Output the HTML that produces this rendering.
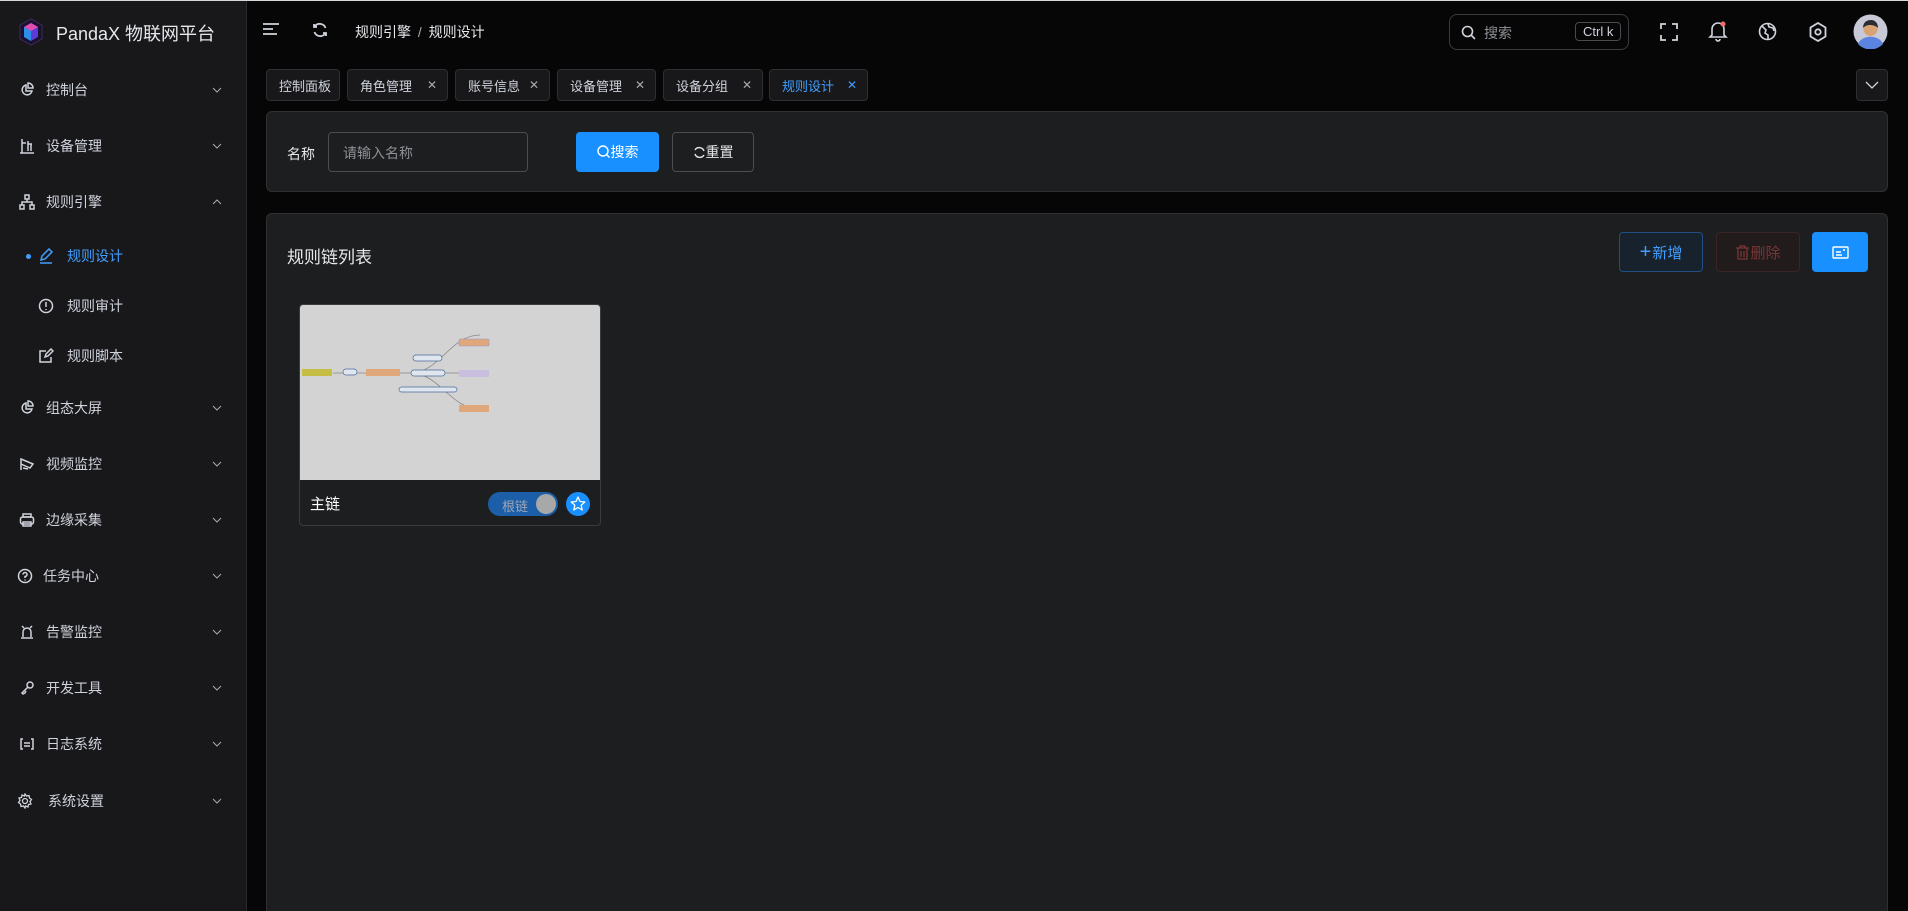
<!DOCTYPE html>
<html><head><meta charset="utf-8"><style>
*{box-sizing:border-box;margin:0;padding:0}
html{width:1908px;height:911px;overflow:hidden}
body{width:1908px;height:911px;overflow:hidden;background:#060606;font-family:"Liberation Sans","Noto Sans CJK SC",sans-serif;color:#cfd3dc;position:relative;font-size:14px}
.topline{position:absolute;left:0;top:0;width:1908px;height:1px;background:#d8d8d8}
.side{position:absolute;left:0;top:1px;width:247px;bottom:0;background:#18181b;border-right:1px solid #2a2a2e}
.logo{position:absolute;left:18px;top:17px}
.brand{position:absolute;left:56px;top:19px;font-size:18px;color:#e5e7eb}
.mi{position:absolute;left:0;width:247px;height:40px;display:flex;align-items:center;color:#cfd3dc;font-size:14px}
.mi .ic{position:absolute;left:19px;width:16px;height:16px}
.mi .tx{position:absolute;left:46px}
.mi .ch{position:absolute;left:212px;width:10px;height:10px}
.sub .tx{left:67px}
.sub .ic{left:38px}
.hdr{position:absolute;left:248px;top:1px;right:0;height:60px;background:#060606}
.tab{position:absolute;top:69px;height:32px;border:1px solid #2e2f33;border-radius:4px;background:#18181b;font-size:13px;color:#cfd3dc;display:flex;align-items:center;padding-left:12px}
.tab .x{position:absolute;right:10px;font-size:12px;color:#aaa}
.panel{position:absolute;left:266px;width:1622px;background:#1d1e1f;border:1px solid #303034;border-radius:6px}
.btn{position:absolute;height:40px;border-radius:4px;display:flex;align-items:center;justify-content:center;font-size:14px}
</style></head><body>
<div class="topline"></div>
<div class="side">
 <svg class="logo" width="26" height="28" viewBox="0 0 26 28"><polygon points="13,1 24,7 24,21 13,27 2,21 2,7" fill="#1a1030" stroke="#3b2a5a"/><polygon points="13,5 20,9 20,19 13,23 6,19 6,9" fill="#5b3bd6"/><polygon points="13,5 20,9 13,13 6,9" fill="#e04cb0"/><polygon points="6,9 13,13 13,23 6,19" fill="#2c8ee8"/></svg>
 <div class="brand">PandaX 物联网平台</div>

 <div class="mi" style="top:69px"><svg class="ic" viewBox="0 0 16 16" fill="none" stroke="#cfd3dc" stroke-width="1.5"><path d="M7 3a5 5 0 1 0 6 6H7z"/><path d="M9 1v5h5a5 5 0 0 0-5-5z"/></svg><span class="tx">控制台</span><svg class="ch" viewBox="0 0 10 10"><path d="M1 3l4 4 4-4" fill="none" stroke="#aaa"/></svg></div>
 <div class="mi" style="top:125px"><svg class="ic" viewBox="0 0 16 16" fill="none" stroke="#cfd3dc" stroke-width="1.5"><path d="M3 1v14M1 15h14M3 5h4M9 3v10M9 6h4M12 6v7"/></svg><span class="tx">设备管理</span><svg class="ch" viewBox="0 0 10 10"><path d="M1 3l4 4 4-4" fill="none" stroke="#aaa"/></svg></div>
 <div class="mi" style="top:181px"><svg class="ic" viewBox="0 0 16 16" fill="none" stroke="#cfd3dc" stroke-width="1.5"><rect x="6" y="1" width="4" height="4"/><rect x="1" y="11" width="4" height="4"/><rect x="11" y="11" width="4" height="4"/><path d="M8 5v3M3 11V8h10v3"/></svg><span class="tx">规则引擎</span><svg class="ch" viewBox="0 0 10 10"><path d="M1 7l4-4 4 4" fill="none" stroke="#aaa"/></svg></div>
 <div class="mi sub" style="top:235px;color:#409eff"><span style="position:absolute;left:26px;width:5px;height:5px;border-radius:50%;background:#409eff"></span><svg class="ic" viewBox="0 0 16 16" fill="none" stroke="#409eff" stroke-width="1.5"><path d="M3 12l1-4 7-7 3 3-7 7zM2 15h12"/></svg><span class="tx">规则设计</span></div>
 <div class="mi sub" style="top:285px"><svg class="ic" viewBox="0 0 16 16" fill="none" stroke="#cfd3dc" stroke-width="1.5"><circle cx="8" cy="8" r="6.5"/><path d="M8 4v5M8 11v1"/></svg><span class="tx">规则审计</span></div>
 <div class="mi sub" style="top:335px"><svg class="ic" viewBox="0 0 16 16" fill="none" stroke="#cfd3dc" stroke-width="1.5"><path d="M13 9v5H2V3h6M7 9l1-3 5-5 2 2-5 5z"/></svg><span class="tx">规则脚本</span></div>
 <div class="mi" style="top:387px"><svg class="ic" viewBox="0 0 16 16" fill="none" stroke="#cfd3dc" stroke-width="1.5"><path d="M7 3a5 5 0 1 0 6 6H7z"/><path d="M9 1v5h5a5 5 0 0 0-5-5z"/></svg><span class="tx">组态大屏</span><svg class="ch" viewBox="0 0 10 10"><path d="M1 3l4 4 4-4" fill="none" stroke="#aaa"/></svg></div>
 <div class="mi" style="top:443px"><svg class="ic" viewBox="0 0 16 16" fill="none" stroke="#cfd3dc" stroke-width="1.5"><path d="M2 3l12 5-3 4-9-4zM2 8v6M4 12l5 1"/></svg><span class="tx">视频监控</span><svg class="ch" viewBox="0 0 10 10"><path d="M1 3l4 4 4-4" fill="none" stroke="#aaa"/></svg></div>
 <div class="mi" style="top:499px"><svg class="ic" viewBox="0 0 16 16" fill="none" stroke="#cfd3dc" stroke-width="1.5"><rect x="1.5" y="5" width="13" height="7" rx="2"/><rect x="4" y="2" width="8" height="3"/><rect x="4" y="10" width="8" height="4"/></svg><span class="tx">边缘采集</span><svg class="ch" viewBox="0 0 10 10"><path d="M1 3l4 4 4-4" fill="none" stroke="#aaa"/></svg></div>
 <div class="mi" style="top:555px"><svg class="ic" viewBox="0 0 16 16" fill="none" stroke="#cfd3dc" stroke-width="1.5" style="left:17px"><circle cx="8" cy="8" r="6.5"/><path d="M6 6.5a2 2 0 1 1 2 2v1.5M8 11.5v1"/></svg><span class="tx" style="left:43px">任务中心</span><svg class="ch" viewBox="0 0 10 10"><path d="M1 3l4 4 4-4" fill="none" stroke="#aaa"/></svg></div>
 <div class="mi" style="top:611px"><svg class="ic" viewBox="0 0 16 16" fill="none" stroke="#cfd3dc" stroke-width="1.5"><path d="M4 13V8a4 4 0 0 1 8 0v5M2 14h12M3 2l2 2M13 2l-2 2"/></svg><span class="tx">告警监控</span><svg class="ch" viewBox="0 0 10 10"><path d="M1 3l4 4 4-4" fill="none" stroke="#aaa"/></svg></div>
 <div class="mi" style="top:667px"><svg class="ic" viewBox="0 0 16 16" fill="none" stroke="#cfd3dc" stroke-width="1.5"><circle cx="11" cy="5" r="3"/><path d="M9 7l-6 6 1 1 2-1 1-2"/></svg><span class="tx">开发工具</span><svg class="ch" viewBox="0 0 10 10"><path d="M1 3l4 4 4-4" fill="none" stroke="#aaa"/></svg></div>
 <div class="mi" style="top:723px"><svg class="ic" viewBox="0 0 16 16" fill="none" stroke="#cfd3dc" stroke-width="1.5"><path d="M4 3H2v10h2M12 3h2v10h-2M5 7h6M5 10h6"/></svg><span class="tx">日志系统</span><svg class="ch" viewBox="0 0 10 10"><path d="M1 3l4 4 4-4" fill="none" stroke="#aaa"/></svg></div>
 <div class="mi" style="top:780px"><svg class="ic" viewBox="0 0 16 16" fill="none" stroke="#cfd3dc" stroke-width="1.3" style="left:17px"><circle cx="8" cy="8" r="2.5"/><path d="M8 1l1.5 2 2.5-.5.5 2.5 2 1.5-1.5 2 1 2.5-2.5.5-.5 2.5-2.5-1L8 15l-1.5-2-2.5.5-.5-2.5-2-1.5 1.5-2-1-2.5 2.5-.5.5-2.5 2.5 1z"/></svg><span class="tx" style="left:48px">系统设置</span><svg class="ch" viewBox="0 0 10 10"><path d="M1 3l4 4 4-4" fill="none" stroke="#aaa"/></svg></div>
</div>

<div class="hdr">
 <svg style="position:absolute;left:14px;top:21px" width="18" height="16" viewBox="0 0 18 16" fill="none" stroke="#cfd3dc" stroke-width="1.8"><path d="M1 2h16M1 7h10M1 12h14"/></svg>
 <svg style="position:absolute;left:64px;top:21px" width="16" height="16" viewBox="0 0 16 16" fill="none" stroke="#cfd3dc" stroke-width="1.8"><path d="M13.5 6A6 6 0 0 0 2.5 5M2.5 10a6 6 0 0 0 11 1M2 2v3h3M14 14v-3h-3"/></svg>
 <div style="position:absolute;left:107px;top:21px;font-size:14px;color:#e5e7eb">规则引擎 <span style="color:#aaa;margin:0 3px">/</span> 规则设计</div>
 <div style="position:absolute;left:1201px;top:13px;width:180px;height:36px;border:1px solid #3a3b40;border-radius:8px">
  <svg style="position:absolute;left:11px;top:10px" width="15" height="15" viewBox="0 0 15 15" fill="none" stroke="#cfd3dc" stroke-width="1.6"><circle cx="6.5" cy="6.5" r="5"/><path d="M10 10l4 4"/></svg>
  <span style="position:absolute;left:34px;top:8px;color:#8d9095;font-size:14px">搜索</span>
  <span style="position:absolute;left:125px;top:7px;border:1px solid #4a4b50;border-radius:4px;padding:1px 7px;font-size:13px;color:#cfd3dc">Ctrl k</span>
 </div>
 <svg style="position:absolute;left:1412px;top:22px" width="18" height="18" viewBox="0 0 18 18" fill="none" stroke="#cfd3dc" stroke-width="1.8"><path d="M1 6V1h5M12 1h5v5M17 12v5h-5M6 17H1v-5"/></svg>
 <svg style="position:absolute;left:1460px;top:19px" width="20" height="22" viewBox="0 0 20 22" fill="none" stroke="#cfd3dc" stroke-width="1.6"><path d="M4 15V9a6 6 0 0 1 12 0v6l2 2H2zM8 19a2 2 0 0 0 4 0"/><circle cx="15" cy="4" r="2.5" fill="#f56c6c" stroke="none"/></svg>
 <svg style="position:absolute;left:1510px;top:21px" width="19" height="19" viewBox="0 0 19 19" fill="none" stroke="#cfd3dc" stroke-width="1.6"><circle cx="9.5" cy="9.5" r="8"/><path d="M4 4l4 4-1 3 3 2v4M10 2l1 3 4 1 1 3"/></svg>
 <svg style="position:absolute;left:1561px;top:21px" width="18" height="20" viewBox="0 0 18 20" fill="none" stroke="#cfd3dc" stroke-width="1.8"><path d="M9 1l7.5 4.5v9L9 19l-7.5-4.5v-9z"/><circle cx="9" cy="10" r="2.7"/></svg>
 <svg style="position:absolute;left:1605px;top:13px" width="35" height="35" viewBox="0 0 35 35"><circle cx="17.5" cy="17.5" r="17" fill="#c7c9d6"/><path d="M5 30a13 10 0 0 1 25 0 17 17 0 0 1-25 0z" fill="#5b84e0"/><circle cx="17.5" cy="15" r="7" fill="#d9a273"/><path d="M10 14c0-6 4-8 8-8s7 3 7 8c-2-2-5-3-8-3-3 0-5 1-7 3z" fill="#2b2b33"/></svg>
</div>

<div class="tab" style="left:266px;width:74px">控制面板</div>
<div class="tab" style="left:347px;width:101px">角色管理<span class="x">✕</span></div>
<div class="tab" style="left:455px;width:95px">账号信息<span class="x">✕</span></div>
<div class="tab" style="left:557px;width:99px">设备管理<span class="x">✕</span></div>
<div class="tab" style="left:663px;width:100px">设备分组<span class="x">✕</span></div>
<div class="tab" style="left:769px;width:99px;color:#409eff">规则设计<span class="x" style="color:#409eff">✕</span></div>
<div class="tab" style="left:1856px;width:32px;padding:0;justify-content:center"><svg width="14" height="8" viewBox="0 0 14 8"><path d="M1 1l6 6 6-6" fill="none" stroke="#cfd3dc" stroke-width="1.3"/></svg></div>

<div class="panel" style="top:111px;height:81px">
 <span style="position:absolute;left:20px;top:32px;font-size:14px;color:#e5e7eb">名称</span>
 <div style="position:absolute;left:61px;top:20px;width:200px;height:40px;border:1px solid #4c4d4f;border-radius:4px;background:#1d1e1f"><span style="position:absolute;left:14px;top:10px;color:#8d9095">请输入名称</span></div>
 <div class="btn" style="left:309px;top:20px;width:83px;background:#1890ff;color:#fff"><svg width="14" height="14" viewBox="0 0 14 14" fill="none" stroke="#fff" stroke-width="1.4"><circle cx="6" cy="6" r="5"/><path d="M9.5 9.5l3 3"/></svg>搜索</div>
 <div class="btn" style="left:405px;top:20px;width:82px;border:1px solid #4c4d4f;color:#e5e7eb"><svg width="13" height="13" viewBox="0 0 13 13" fill="none" stroke="#e5e7eb" stroke-width="1.4"><path d="M11 5A5 5 0 0 0 2 4M2 8a5 5 0 0 0 9 1"/></svg>重置</div>
</div>

<div class="panel" style="top:213px;height:710px">
 <span style="position:absolute;left:20px;top:29px;font-size:17px;color:#e5e7eb">规则链列表</span>
 <div class="btn" style="left:1352px;top:18px;width:84px;border:1px solid #1f4f85;background:#18222c;color:#409eff;font-size:15px"><span style="font-size:20px;font-weight:300;margin-right:1px">+</span>新增</div>
 <div class="btn" style="left:1449px;top:18px;width:84px;border:1px solid #3b2424;background:#221b1c;color:#7a3535;font-size:15px"><svg width="15" height="15" viewBox="0 0 15 15" fill="none" stroke="#7a3535" stroke-width="1.3"><path d="M1 3h13M5 3V1h5v2M3 3v11h9V3M6 6v6M9 6v6"/></svg>删除</div>
 <div class="btn" style="left:1545px;top:18px;width:56px;background:#1890ff"><svg width="17" height="13" viewBox="0 0 17 13" fill="none" stroke="#fff" stroke-width="1.4"><rect x="1" y="1" width="15" height="11" rx="1"/><path d="M4 6h5M4 9h6M11 4h2"/></svg></div>

 <div style="position:absolute;left:32px;top:90px;width:302px;height:222px;border:1px solid #3a3b40;border-radius:4px;overflow:hidden;background:#1d1e1f">
  <svg width="300" height="175" viewBox="0 0 300 175" style="display:block;background:#d3d3d3">
   <g stroke="#888" stroke-width="0.8" fill="none"><path d="M33 68h42M56 68h12M100 68h32M110 68c30 0 40-38 70-38M110 68h70M110 68c30 0 40 36 70 36"/></g>
   <rect x="2" y="64" width="30" height="7" fill="#c5bd44"/>
   <rect x="43" y="64" width="14" height="6" rx="3" fill="#e0e6ee" stroke="#4a6a9a" stroke-width="0.7"/>
   <rect x="66" y="64" width="34" height="7" fill="#e0a87a"/>
   <rect x="113" y="50" width="29" height="6" rx="3" fill="#e0e6ee" stroke="#4a6a9a" stroke-width="0.7"/>
   <rect x="111" y="65" width="34" height="6" rx="3" fill="#e0e6ee" stroke="#4a6a9a" stroke-width="0.7"/>
   <rect x="99" y="82" width="58" height="5" rx="2.5" fill="#e0e6ee" stroke="#4a6a9a" stroke-width="0.7"/>
   <rect x="159" y="34" width="30" height="7" rx="1" fill="#e0a87a" stroke="#9a9ad0" stroke-width="0.6"/>
   <rect x="159" y="65" width="30" height="7" fill="#c9bedd"/>
   <rect x="159" y="100" width="30" height="7" fill="#e0a87a"/>
  </svg>
  <span style="position:absolute;left:10px;top:188px;font-size:15px;color:#fff">主链</span>
  <div style="position:absolute;left:188px;top:187px;width:70px;height:24px;border-radius:12px;background:#1c5fa8"><span style="position:absolute;left:14px;top:4px;font-size:13px;color:#9ea6b5">根链</span><span style="position:absolute;right:2px;top:2px;width:20px;height:20px;border-radius:50%;background:#a8a8a8"></span></div>
  <div style="position:absolute;left:266px;top:187px;width:24px;height:24px;border-radius:50%;background:#1890ff"><svg width="24" height="24" viewBox="0 0 24 24"><path d="M12 5l2 4.5 4.8.5-3.6 3.2 1 4.8-4.2-2.5-4.2 2.5 1-4.8L5.2 10l4.8-.5z" fill="none" stroke="#fff" stroke-width="1.3" stroke-linejoin="round"/></svg></div>
 </div>
</div>
</body></html>
